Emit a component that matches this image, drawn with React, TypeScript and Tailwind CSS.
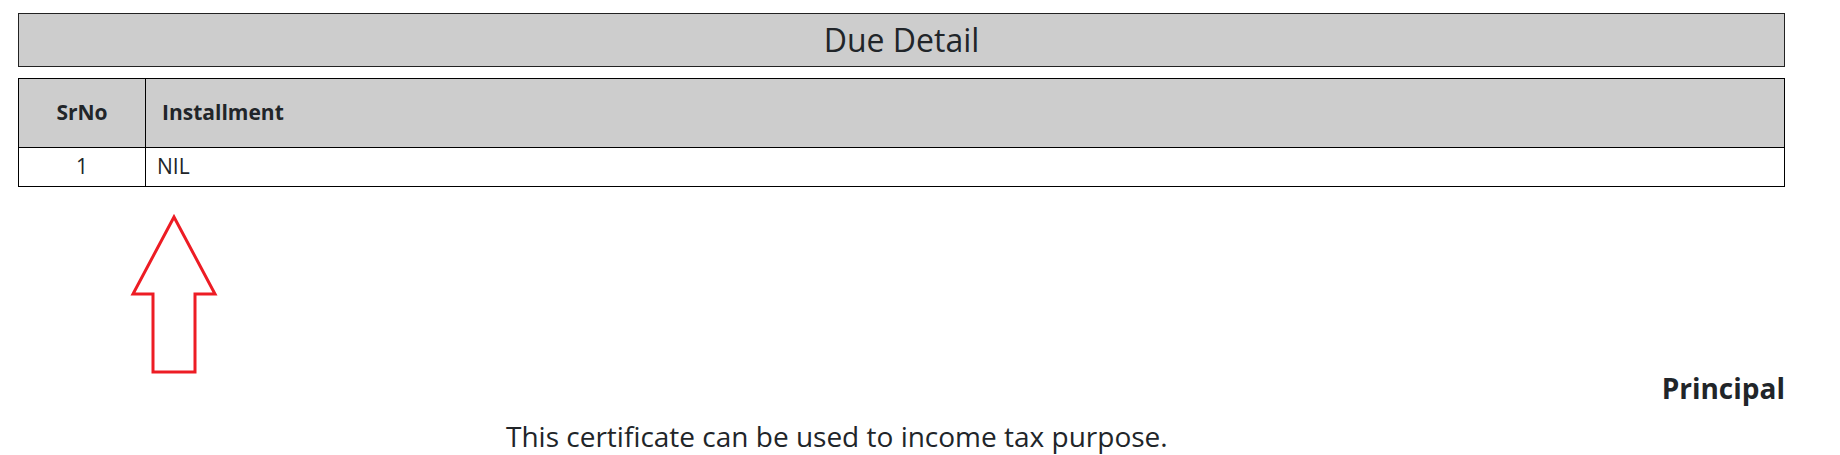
export default function App() {
  return (
    <div className="relative w-[1840px] h-[455px] bg-white text-[#212529] font-['Open_Sans',sans-serif]">
      <div className="ml-[18px] w-[1767px] pt-[13px]">
        <div className="h-[54px] border border-[#222] bg-[#cdcdcd] flex items-center justify-center">
          <h3 className="text-[32px] font-medium leading-none">Due Detail</h3>
        </div>

        <table className="mt-[11px] w-full border-collapse border border-black text-[21px]">
          <thead>
            <tr className="bg-[#cdcdcd] h-[69px]">
              <th className="w-[127px] border border-black font-bold text-center">SrNo</th>
              <th className="border border-black font-bold text-left pl-[16px]">Installment</th>
            </tr>
          </thead>
          <tbody>
            <tr className="h-[39px]">
              <td className="border border-black text-center">1</td>
              <td className="border border-black pl-[11px]">NIL</td>
            </tr>
          </tbody>
        </table>

        <div className="mt-[181px] text-right text-[28px] font-bold leading-[40px]">Principal</div>
        <p className="mt-[8px] text-[28px] leading-[40px] pl-[488px]">This certificate can be used to income tax purpose.</p>
      </div>

      {/* red annotation arrow */}
      <svg className="absolute left-[130px] top-[214px]" width="90" height="162" viewBox="0 0 90 162">
        <path
          d="M44 3 L3 80 L23 80 L23 158 L65 158 L65 80 L85 80 Z"
          fill="none"
          stroke="#ed1c24"
          strokeWidth="3"
          strokeLinejoin="miter"
        />
      </svg>
    </div>
  );
}
